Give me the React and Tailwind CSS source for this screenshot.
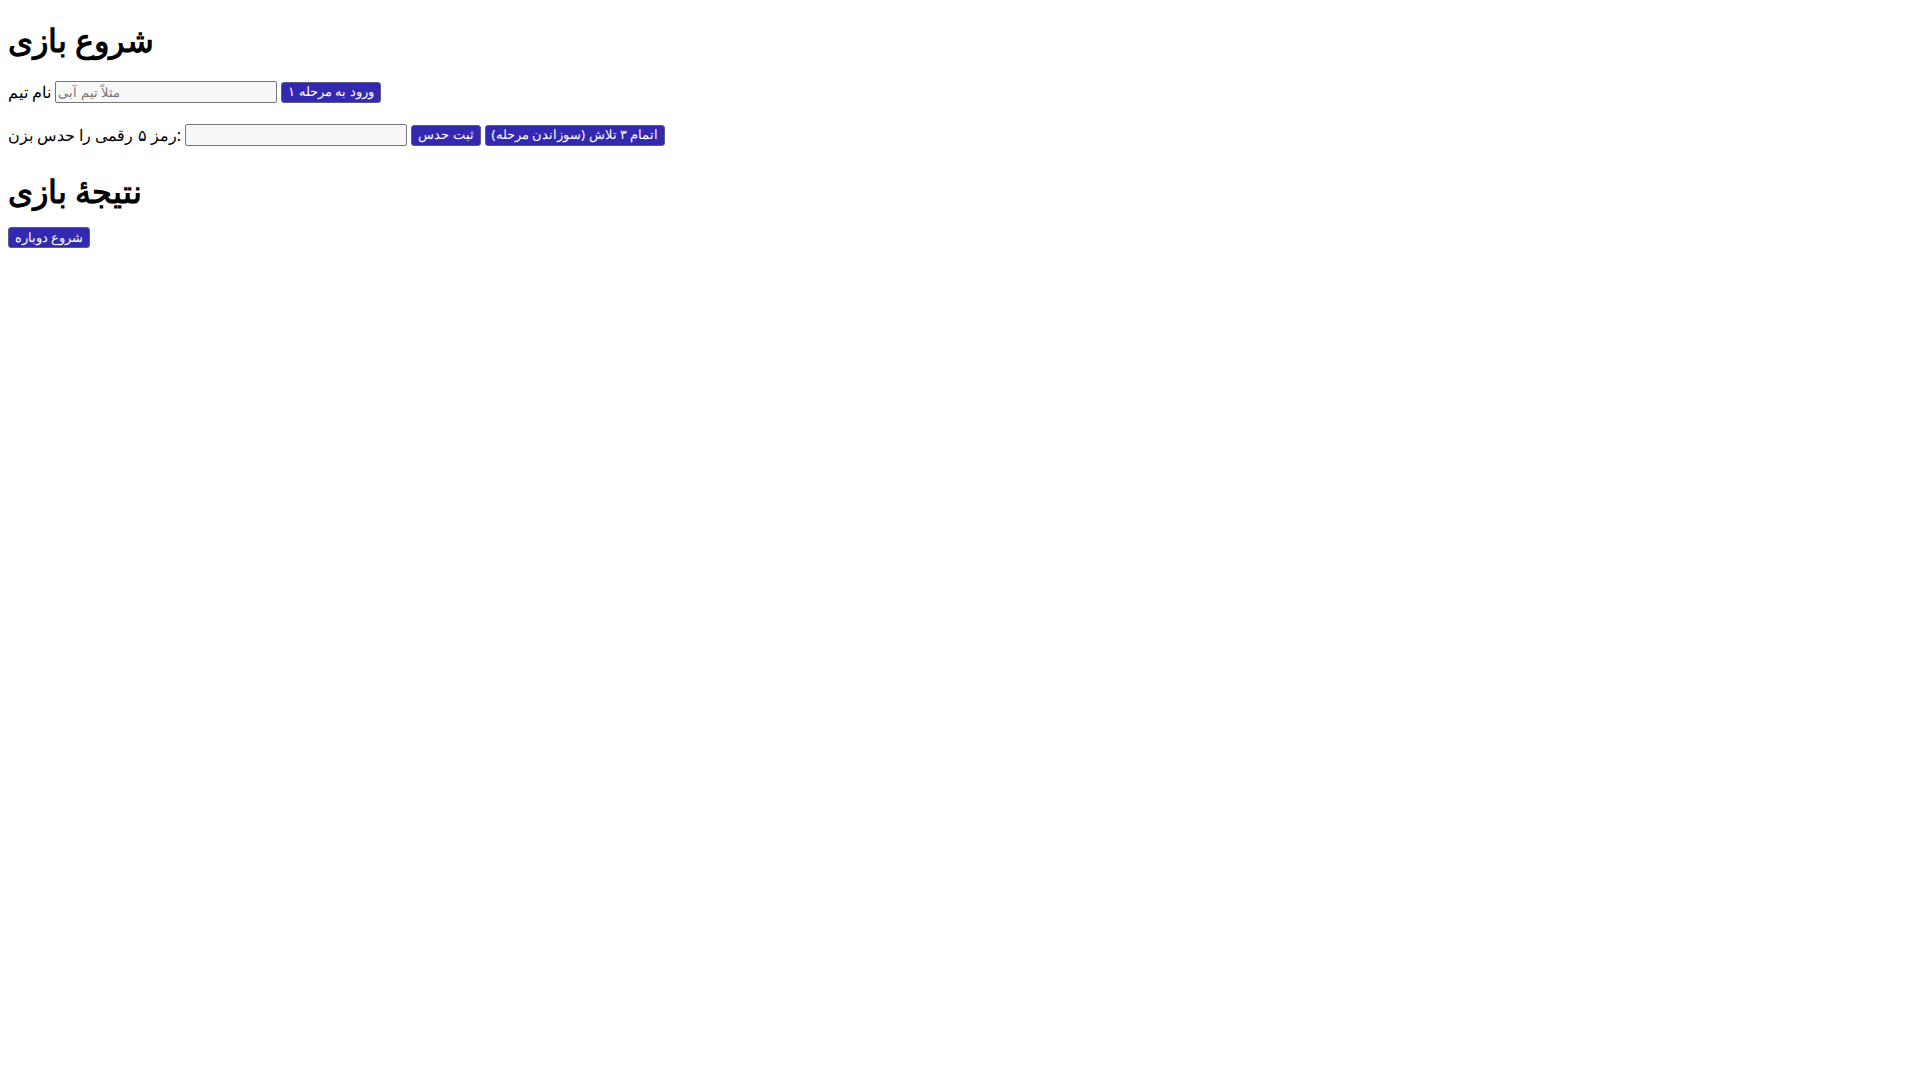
import React, { useState } from "react";

const btn =
  "h-[21px] px-[6px] border border-[#5b5b8a] rounded-[3px] bg-[#3329b1] text-white text-[13.33px] font-['Noto_Sans',sans-serif] font-normal leading-none whitespace-nowrap";
const field =
  "w-[222px] h-[22px] px-[2px] border border-[#767676] rounded-[2px] bg-[#f8f8f8] text-[13.33px] font-['Noto_Sans',sans-serif] font-normal text-black placeholder:text-[#757575] outline-none";
const label = "text-[16px] font-['Noto_Sans',sans-serif] font-normal";

const App = () => {
  const [team, setTeam] = useState("");
  const [guess, setGuess] = useState("");

  return (
    <div className="min-h-screen bg-white px-2 text-black">
      <h1 className="pt-[22px] text-[32px] font-['Noto_Sans',sans-serif] font-bold leading-[36px]">
        شروع بازی
      </h1>

      {/* Team name */}
      <div className="mt-[22px] h-[24px] flex items-center gap-[4px]">
        <span className={label}>نام تیم</span>
        <input
          type="text"
          placeholder="مثلاً تیم آبی"
          className={field}
          value={team}
          onChange={(e) => setTeam(e.target.value)}
        />
        <button className={btn}>ورود به مرحله ۱</button>
      </div>

      {/* Guess */}
      <div className="mt-[19px] h-[24px] flex items-center gap-[4px]">
        <span className={label}>رمز ۵ رقمی را حدس بزن:</span>
        <input
          type="text"
          className={field}
          value={guess}
          onChange={(e) => setGuess(e.target.value)}
        />
        <button className={btn}>ثبت حدس</button>
        <button className={btn}>اتمام ۳ تلاش (سوزاندن مرحله)</button>
      </div>

      <h2 className="mt-[26px] text-[32px] font-['Noto_Sans',sans-serif] font-bold leading-[36px]">
        نتیجهٔ بازی
      </h2>

      <div className="mt-[18px] h-[21px] flex items-center">
        <button className={btn}>شروع دوباره</button>
      </div>
    </div>
  );
};

export default App;
